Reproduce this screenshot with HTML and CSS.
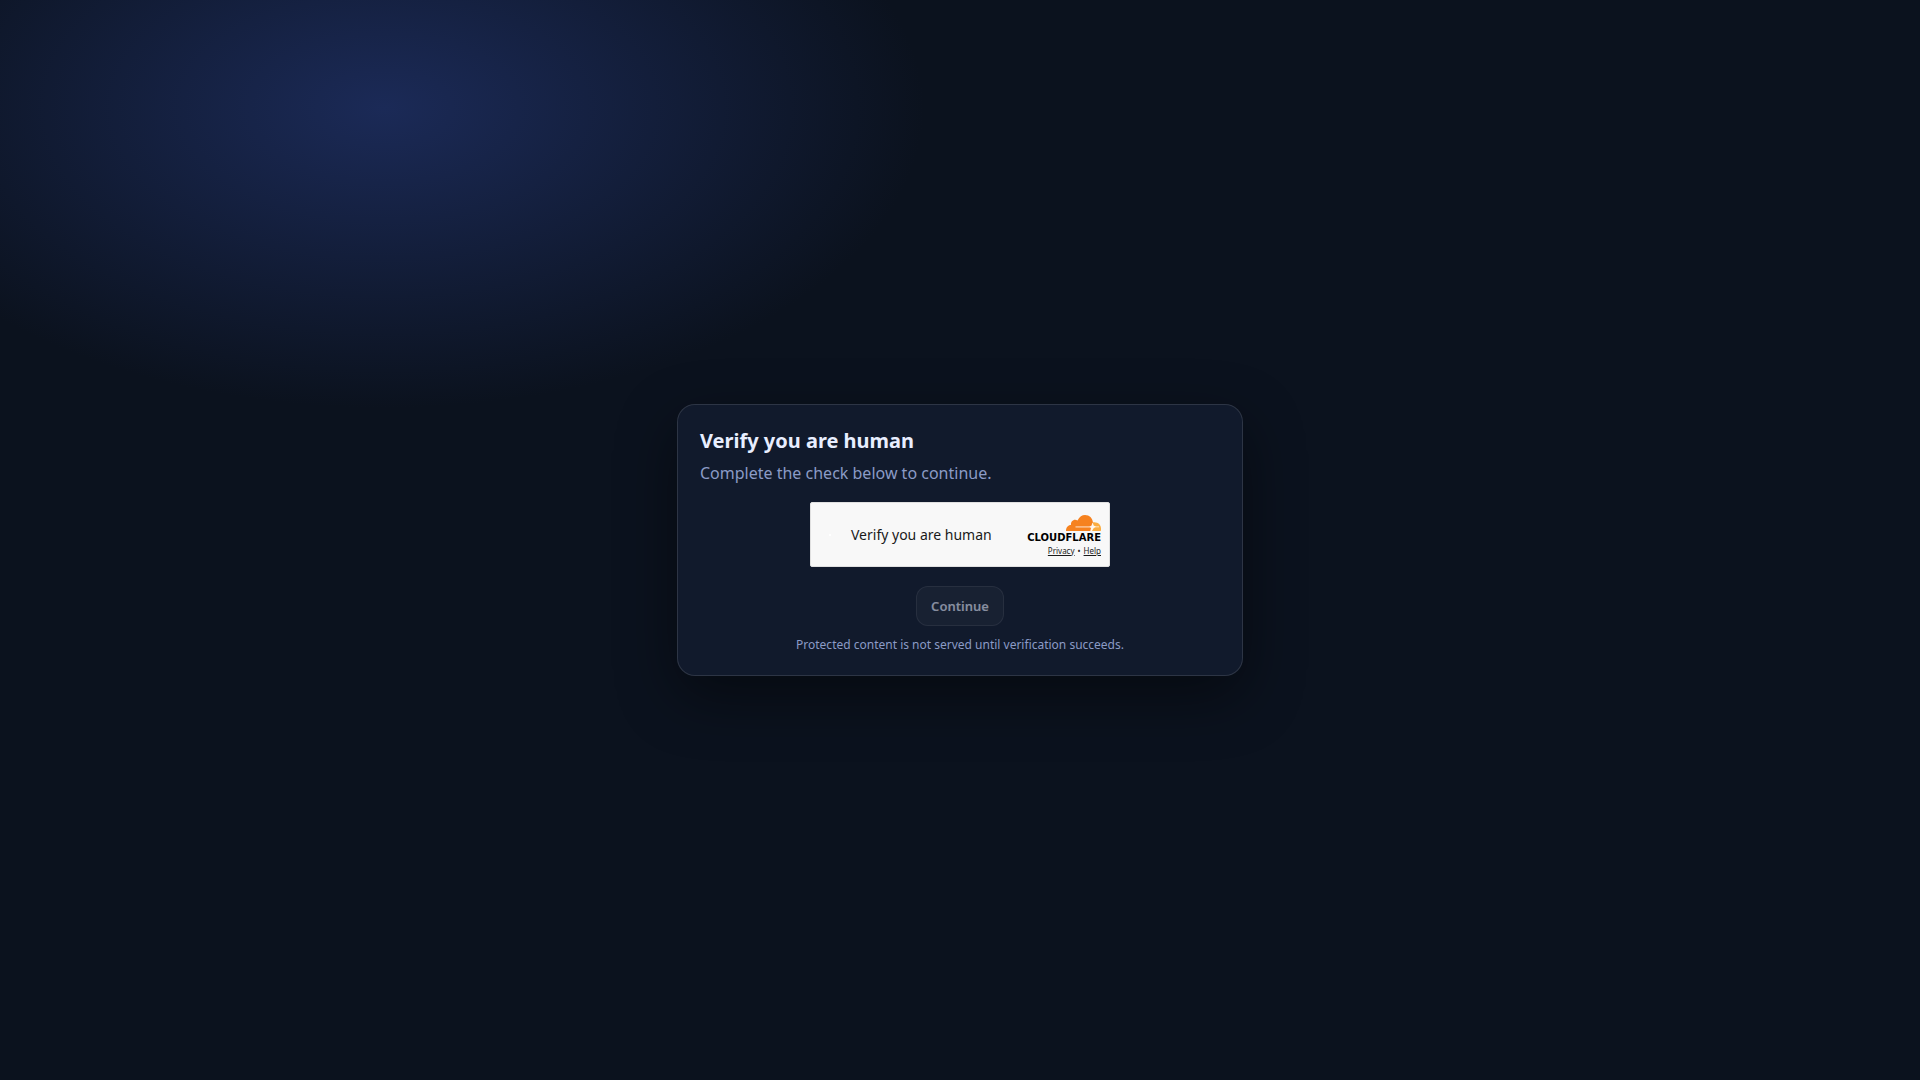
FILE: index.html
```html
<!DOCTYPE html>
<html lang="en">
<head>
    <meta charset="UTF-8">
    <meta name="viewport" content="width=device-width, initial-scale=1.0">
    <title>Verify you are human</title>
    <link rel="stylesheet" href="styles.css">
</head>
<body>

<main class="card">
    <h1>Verify you are human</h1>
    <p class="intro">Complete the check below to continue.</p>

    <div class="widget">
        <span class="spinner"></span>
        <span class="widget-label">Verify you are human</span>
        <div class="branding">
            <svg class="cloud" viewBox="0 0 70 32" aria-hidden="true">
                <path fill="#fbad41" d="M54 14.500C63 13 70 19 70 27V30.500Q70 32 69 32H48L51 26Z"/>
                <path fill="#f6821f" d="M0 32C0 25 4 20 10 20C9 13 16 7 23 11C27 3 32 0 38 0C47 0 53 6 54 15L50 32Z"/>
                <path fill="#fff" opacity=".45" d="M19 22H49V25.500H19ZM55 22H66V25H55Z"/>
                <path fill="#fff" opacity=".9" d="M53 15L55.500 21L60 23.500L55.500 26L52 32H48.500L50 26L47 23.500L51 21Z"/>
            </svg>
            <span class="wordmark">CLOUDFLARE</span>
            <div class="links">
                <a href="#">Privacy</a>
                <span>•</span>
                <a href="#">Help</a>
            </div>
        </div>
    </div>

    <button type="button" class="continue" disabled>Continue</button>
    <p class="note">Protected content is not served until verification succeeds.</p>
</main>

</body>
</html>
```
FILE: styles.css
```css
* {
    box-sizing: border-box;
}
body {
    font-family: "Noto Sans", sans-serif;
    background: radial-gradient(900px 500px at 20% 10%, #1b2a57 0%, transparent 60%), #0b121e;
    color: #e8eeff;
    margin: 0;
    min-height: 100vh;
    display: flex;
    align-items: center;
    justify-content: center;
}
.card {
    width: 100%;
    max-width: 566px;
    padding: 22px;
    background-color: #111a2c;
    border: 1px solid rgba(255, 255, 255, 0.12);
    border-radius: 18px;
    box-shadow: 0 20px 60px rgba(0, 0, 0, 0.45);
    display: flex;
    flex-direction: column;
    align-items: center;
}
h1 {
    align-self: flex-start;
    font-size: 20px;
    line-height: 27px;
    margin: 0 0 8px;
}
.intro {
    align-self: flex-start;
    color: #8b9bc6;
    font-size: 16px;
    line-height: 22px;
    margin: 0 0 18px;
}
.widget {
    width: 300px;
    max-width: 100%;
    height: 65px;
    padding: 0 8px 0 18px;
    background-color: #f8f8f8;
    border: 1px solid #e0e0e0;
    border-radius: 2px;
    color: #1a1a1a;
    display: flex;
    align-items: center;
}
.spinner {
    width: 2px;
    height: 2px;
    background-color: #fff;
    margin-right: 20px;
}
.widget-label {
    font-size: 14px;
}
.branding {
    margin-left: auto;
    padding-top: 2px;
    display: flex;
    flex-direction: column;
    align-items: flex-end;
}
.cloud {
    width: 35px;
    height: 16px;
}
.wordmark {
    font-family: "DejaVu Sans", sans-serif;
    font-size: 10px;
    font-weight: 700;
    line-height: 14px;
    color: #000;
}
.links {
    display: flex;
    gap: 3px;
    font-size: 8px;
    line-height: 12px;
}
.links a {
    color: #1a1a1a;
}
.continue {
    margin: 19px 0 11px;
    padding: 10px 14px;
    font-family: inherit;
    font-size: 13px;
    font-weight: 600;
    line-height: 18px;
    color: #e8eeff;
    background-color: rgba(255, 255, 255, 0.06);
    border: 1px solid rgba(255, 255, 255, 0.12);
    border-radius: 12px;
    opacity: 0.55;
}
.note {
    color: #8b9bc6;
    font-size: 12px;
    line-height: 16px;
    margin: 0;
}
```
